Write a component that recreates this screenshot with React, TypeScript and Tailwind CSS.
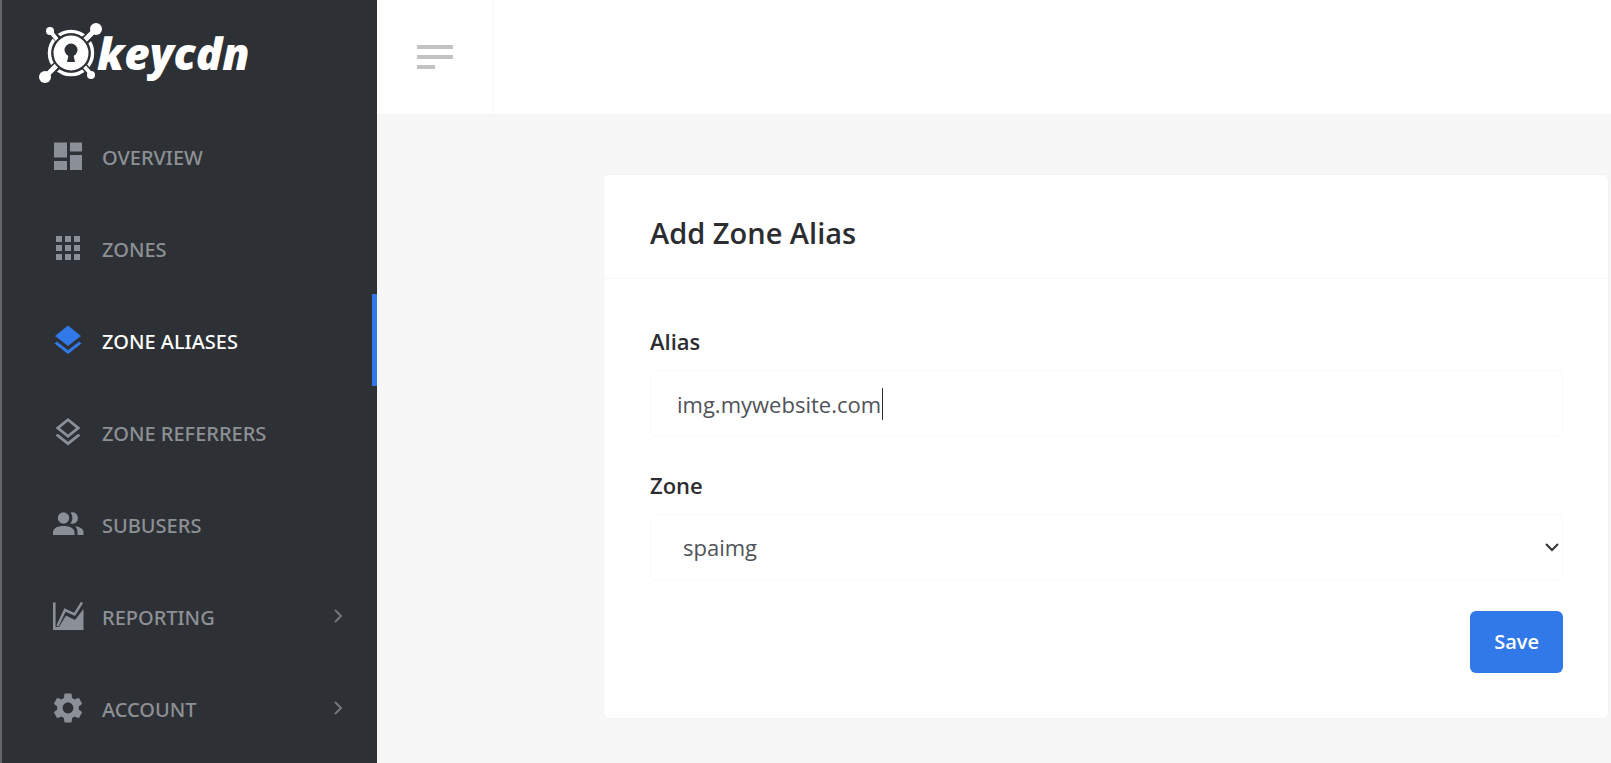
import React, { useState } from 'react';
import { MdApps, MdSettings } from 'react-icons/md';

type IconProps = { className?: string };

function DashboardIcon({ className }: IconProps) {
  return (
    <svg viewBox="0 0 36 36" fill="currentColor" className={className}>
      <path d="M4 4.500h13v15H4zM4 23h13v9H4zM20 4.500h12v9H20zM20 17h12v15H20z" />
    </svg>
  );
}

function LayersIcon({ className }: IconProps) {
  return (
    <svg viewBox="0 0 36 36" fill="currentColor" className={className}>
      <path d="M18 3.500 31 14 18 24 5 14zM18 28.200l11-8.600 2.500 1.900L18 32 4.500 21.500 7 19.600z" />
    </svg>
  );
}

function LayersOutlineIcon({ className }: IconProps) {
  return (
    <svg viewBox="0 0 36 36" fill="currentColor" className={className}>
      <path
        fillRule="evenodd"
        d="M18 4 30.500 14 18 24 5.500 14zM18 7.600 10 14 18 20.400 26 14zM18 27.800 28.200 19.700l2.300 1.800L18 31.500 5.500 21.500l2.300-1.800z"
      />
    </svg>
  );
}

function UsersIcon({ className }: IconProps) {
  return (
    <svg viewBox="0 0 36 36" fill="currentColor" className={className}>
      <circle cx="13.500" cy="12" r="5.700" />
      <path d="M20.500 6.600a5.700 5.700 0 1 1 0 10.800 8.400 8.400 0 0 0 0-10.800z" />
      <path d="M3 29v-2.500C3 22 8 20 13.500 20S24.500 22 24.500 26.500V29z" />
      <path d="M25.200 20.200c4.800.5 8.300 2.500 8.300 6.100V29h-6v-2.700c0-2.600-.8-4.600-2.300-6.100z" />
    </svg>
  );
}

function ChartIcon({ className }: IconProps) {
  return (
    <svg viewBox="0 0 36 36" className={className}>
      <path d="M4.300 4.500V31" fill="none" stroke="currentColor" strokeWidth="2.600" />
      <path d="M3 32v-3h6l7-11.500 9 4.500 8.500-11V32z" fill="currentColor" />
      <path d="M7.500 28 15 12l9.500 4.500L32 4.500" fill="none" stroke="currentColor" strokeWidth="2.500" />
    </svg>
  );
}

function Chevron({ className }: IconProps) {
  return (
    <svg viewBox="0 0 14 14" fill="none" stroke="currentColor" strokeWidth="2" className={className}>
      <path d="M4 1l6 6-6 6" />
    </svg>
  );
}

function LogoMark() {
  return (
    <svg viewBox="0 0 64 62" fill="none" className="h-[62px] w-16 shrink-0">
      <circle cx="32" cy="31" r="21.500" stroke="#fff" strokeWidth="3.500" />
      {/* dark gaps where the arms cross the ring */}
      <g stroke="#2d3034">
        <path d="M14 12l8 8M44 43l7 8" strokeWidth="7" />
        <path d="M52 13l-8 7M12 49l9-8" strokeWidth="9" />
      </g>
      <g stroke="#fff">
        <path d="M11 9l9 11M44 43l8 9" strokeWidth="4" />
        <path d="M57 7 44 20M6 55l13-13" strokeWidth="5" />
      </g>
      <g fill="#fff">
        <circle cx="11" cy="9" r="4" />
        <circle cx="57" cy="7" r="6" />
        <circle cx="6" cy="55" r="6" />
        <circle cx="52" cy="53" r="4" />
      </g>
      <circle cx="32" cy="31" r="18.500" fill="#fff" stroke="#2d3034" strokeWidth="2" />
      <circle cx="32" cy="28" r="6.500" fill="#2d3034" />
      <path d="M30 31h4l2 9h-8z" fill="#2d3034" />
    </svg>
  );
}

const navItems = [
  { label: 'OVERVIEW', icon: DashboardIcon },
  { label: 'ZONES', icon: MdApps },
  { label: 'ZONE ALIASES', icon: LayersIcon, active: true },
  { label: 'ZONE REFERRERS', icon: LayersOutlineIcon },
  { label: 'SUBUSERS', icon: UsersIcon },
  { label: 'REPORTING', icon: ChartIcon, expandable: true },
  { label: 'ACCOUNT', icon: MdSettings, expandable: true },
];

function Sidebar() {
  return (
    <aside className="w-[377px] shrink-0 border-l-2 border-[#63666a] bg-[#2d3034]">
      <a href="#" aria-label="keycdn" className="flex h-[110px] items-center pb-1 pl-[37px]">
        <LogoMark />
        <span className="-ml-[6px] text-[44px] leading-[54px] font-extrabold text-white italic">keycdn</span>
      </a>
      <nav className="font-['Noto_Sans',sans-serif]">
        {navItems.map(({ label, icon: Icon, active, expandable }) => (
          <a
            key={label}
            href="#"
            className={`flex h-[92px] items-center border-r-[5px] pl-12 text-[20px] font-medium ${
              active ? 'border-[#3179e8] text-white' : 'border-transparent text-[#8d9095]'
            }`}
          >
            <Icon className={`size-9 shrink-0 ${active ? 'text-[#3179e8]' : 'text-[#8b8f98]'}`} />
            <span className="ml-4 flex-1 pt-1">{label}</span>
            {expandable && <Chevron className="mr-[27px] size-[14px] text-[#74777b]" />}
          </a>
        ))}
      </nav>
    </aside>
  );
}

function App() {
  const [alias, setAlias] = useState('img.mywebsite.com');
  const [zone, setZone] = useState('spaimg');

  return (
    <div className="flex min-h-screen bg-[#f7f7f7] font-['Open_Sans','Noto_Sans',sans-serif]">
      <Sidebar />

      <div className="min-w-0 flex-1">
        <header className="flex h-[115px] border-b border-[#f3f3f3] bg-white">
          <button type="button" aria-label="Toggle menu" className="w-[117px] border-r border-[#f7f7f7] pl-10">
            <span className="flex flex-col gap-[6px]">
              <span className="h-1 w-9 bg-[#c3c3c3]" />
              <span className="h-1 w-9 bg-[#c3c3c3]" />
              <span className="h-1 w-[18px] bg-[#c3c3c3]" />
            </span>
          </button>
        </header>

        <main className="pt-[59px] pr-[2px] pb-11 pl-[226px]">
          <section className="rounded-md border border-[#f2f2f2] bg-white">
            <h1 className="border-b border-[#f7f7f7] px-[46px] pt-[39px] pb-[26px] text-[29px] leading-[38px] font-semibold text-[#2b2d30]">
              Add Zone Alias
            </h1>
            <form className="pt-[46px] pr-[45px] pb-[45px] pl-[46px]" onSubmit={(e) => e.preventDefault()}>
              <label htmlFor="alias" className="block text-[22px] leading-8 font-semibold text-[#2b2d30]">
                Alias
              </label>
              <div className="relative mt-[13px]">
                <input
                  id="alias"
                  type="text"
                  value={alias}
                  onChange={(e) => setAlias(e.target.value)}
                  className="block h-[67px] w-full rounded-md border border-[#f9f9f9] px-[26px] text-[22px] text-[#505358] outline-none"
                />
                {/* text caret */}
                <span className="absolute top-[18px] left-[232px] h-8 w-px bg-[#2b2d30]" />
              </div>

              <label htmlFor="zone" className="mt-8 block text-[22px] leading-8 font-semibold text-[#2b2d30]">
                Zone
              </label>
              <div className="relative mt-[13px]">
                <select
                  id="zone"
                  value={zone}
                  onChange={(e) => setZone(e.target.value)}
                  className="block h-[67px] w-full appearance-none rounded-md border border-[#f9f9f9] px-8 text-[22px] text-[#505358] outline-none"
                >
                  <option value="spaimg">spaimg</option>
                </select>
                <Chevron className="pointer-events-none absolute top-[26px] right-1 size-[14px] rotate-90 text-[#333]" />
              </div>

              <div className="mt-[30px] flex justify-end">
                <button
                  type="submit"
                  className="h-[62px] rounded-md bg-[#3179e8] px-6 text-[20px] font-semibold text-white"
                >
                  Save
                </button>
              </div>
            </form>
          </section>
        </main>
      </div>
    </div>
  );
}

export default App;
